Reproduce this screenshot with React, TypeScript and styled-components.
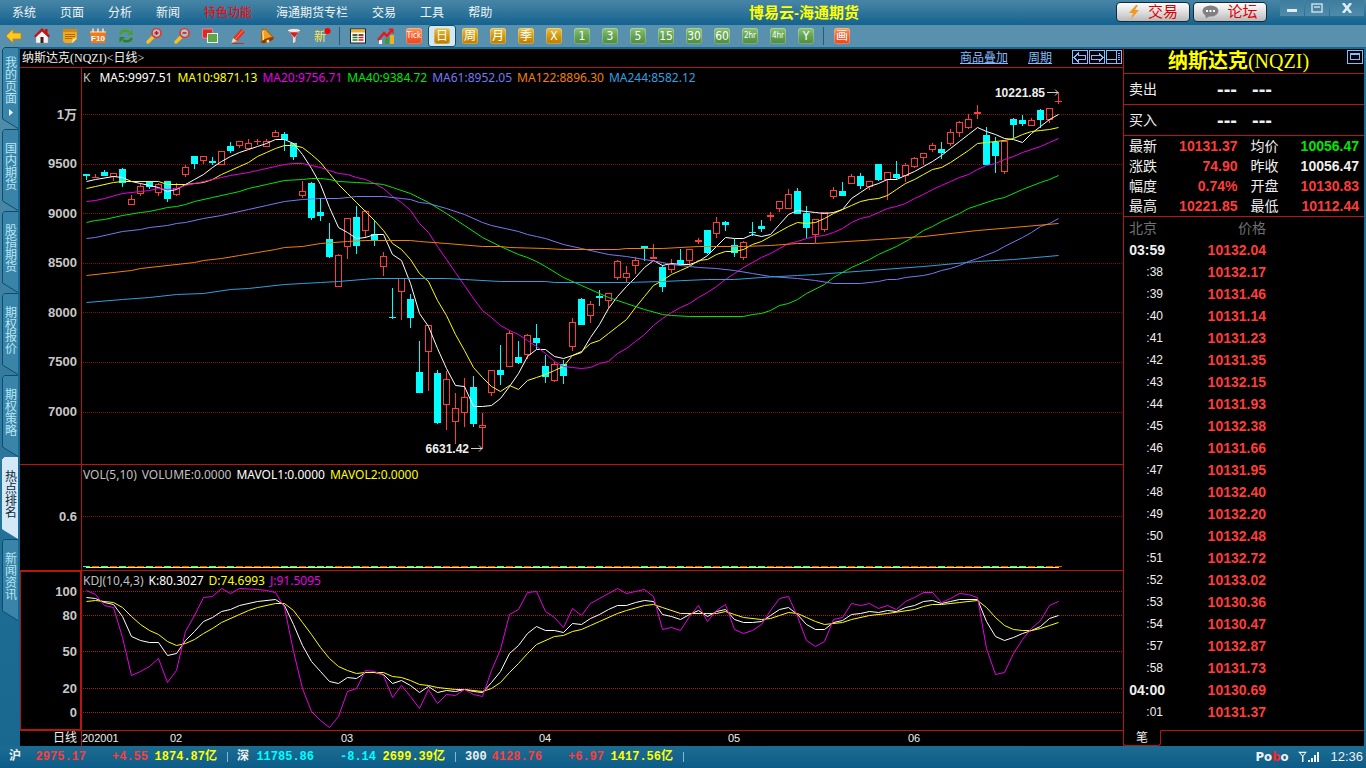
import React from "react";
import styled, { createGlobalStyle, css } from "styled-components";

/* ---------- theme values ---------- */

const RED = "#ff3c3c";
const CYAN = "#00ffff";
const YELLOW = "#ffff00";
const WHITE = "#f0f0f0";
const GREY = "#c0c0c0";
const MAGENTA = "#e800e8";
const GREEN = "#00e800";
const LINE = "#b8160c";
const SANS = '"Liberation Sans", "Noto Sans CJK SC", sans-serif';
const LABEL = '"DejaVu Sans Condensed", "DejaVu Sans", "Noto Sans CJK SC", sans-serif';
const LEGEND = '"Noto Sans", "Noto Sans CJK SC", sans-serif';
const SERIF = '"Liberation Serif", "Noto Sans CJK SC", serif';
const MONO = '"Liberation Mono", "Noto Sans CJK SC", monospace';

const GlobalStyle = createGlobalStyle`
  * { box-sizing: border-box; }
  body { margin: 0; background: #000; }
  button { margin: 0; padding: 0; border: 0; background: none; color: inherit; font: inherit; cursor: pointer; }
`;

/* ---------- chart data ---------- */

type Candle = [up: 0 | 1, top: number, bottom: number, high: number, low: number];

const CANDLES: Candle[] = [
  [0, 174, 176, 174, 180], [1, 177, 178, 174, 178], [0, 172, 176, 170, 176], [1, 173, 177, 173, 181],
  [0, 169, 183, 168, 187], [1, 199, 205, 195, 205], [1, 186, 194, 184, 196], [0, 182, 187, 182, 189],
  [1, 184, 193, 183, 196], [0, 181, 199, 181, 202], [1, 188, 195, 183, 196], [1, 167, 175, 165, 177],
  [0, 156, 164, 156, 169], [1, 156, 161, 156, 164], [0, 161, 163, 157, 165], [1, 151, 165, 151, 165],
  [0, 146, 151, 142, 153], [1, 141, 146, 141, 148], [1, 143, 149, 139, 149], [1, 141, 142, 139, 145],
  [1, 141, 147, 139, 147], [1, 132, 137, 130, 137], [0, 134, 140, 132, 151], [0, 143, 157, 143, 160],
  [1, 191, 196, 181, 198], [0, 183, 218, 182, 220], [0, 212, 216, 198, 221], [0, 239, 257, 223, 258],
  [1, 255, 287, 254, 287], [1, 218, 247, 218, 259], [0, 217, 246, 206, 254], [1, 211, 231, 210, 238],
  [0, 234, 240, 220, 246], [1, 256, 267, 252, 276], [0, 317, 318, 288, 319], [1, 278, 292, 278, 320],
  [0, 299, 318, 294, 328], [0, 372, 393, 341, 393], [1, 325, 352, 325, 391], [0, 373, 423, 370, 424],
  [1, 379, 405, 371, 430], [1, 408, 422, 393, 444], [1, 397, 413, 378, 427], [0, 387, 424, 376, 427],
  [1, 425, 428, 413, 449], [1, 370, 393, 370, 396], [0, 370, 375, 345, 385], [1, 333, 367, 331, 367],
  [0, 357, 363, 341, 364], [1, 335, 355, 334, 359], [0, 338, 343, 324, 349], [0, 366, 377, 355, 383],
  [1, 364, 381, 362, 382], [0, 364, 376, 360, 384], [1, 322, 347, 318, 351], [0, 299, 325, 298, 325],
  [1, 304, 316, 301, 323], [0, 296, 298, 290, 306], [1, 293, 301, 293, 308], [1, 261, 278, 260, 280],
  [1, 273, 278, 266, 282], [1, 260, 266, 257, 274], [0, 246, 248, 246, 261], [1, 257, 259, 244, 259],
  [0, 267, 287, 265, 292], [1, 264, 270, 259, 273], [0, 260, 264, 249, 264], [1, 249, 261, 249, 266],
  [1, 240, 242, 238, 244], [0, 230, 253, 230, 254], [1, 222, 234, 217, 238], [0, 222, 225, 221, 231],
  [0, 245, 253, 239, 257], [1, 242, 258, 241, 260], [0, 232, 233, 222, 236], [0, 226, 229, 220, 232],
  [1, 215, 217, 212, 221], [1, 201, 209, 201, 212], [1, 194, 209, 189, 209], [0, 191, 214, 188, 214],
  [0, 213, 228, 206, 238], [1, 219, 235, 219, 243], [1, 212, 230, 212, 232], [1, 190, 197, 187, 199],
  [0, 191, 196, 182, 196], [1, 176, 184, 174, 184], [0, 176, 186, 173, 189], [1, 181, 187, 181, 190],
  [0, 164, 180, 164, 181], [1, 172, 180, 172, 200], [0, 174, 178, 161, 180], [1, 165, 176, 163, 182],
  [1, 158, 167, 157, 168], [1, 153, 158, 153, 165], [1, 145, 150, 143, 152], [0, 149, 153, 142, 159],
  [1, 132, 144, 129, 146], [1, 122, 133, 121, 137], [1, 119, 128, 114, 129], [1, 112, 114, 105, 119],
  [0, 135, 165, 127, 165], [0, 142, 156, 137, 173], [1, 141, 172, 141, 174], [0, 119, 125, 118, 138],
  [0, 120, 124, 115, 126], [1, 120, 126, 118, 126], [0, 110, 120, 109, 128], [1, 108, 120, 108, 123],
  [1, 101, 102, 92, 104],
];

/* Each series is a list of "bar,level" knots. */
const MA5 =
  "0,181 1,179 3,176 4,177 5,181 6,183 8,187 9,191 10,189 11,184 12,179 13,174 14,167 15,161 16,156 17,152 18,149 19,146 20,143 21,139 22,139 23,143 24,154 25,168 26,184 27,207 28,227 29,232 30,238 31,237 32,234 33,234 34,254 35,260 36,283 37,313 38,326 39,348 40,368 41,385 42,386 43,406 44,406 45,405 46,398 47,386 48,373 49,356 50,349 51,349 52,356 53,358 54,355 55,352 56,337 57,324 58,308 59,296 60,286 61,277 62,267 63,260 64,265 65,263 66,264 67,264 68,261 69,255 70,246 71,237 72,238 73,238 74,234 75,236 76,234 77,224 78,214 79,210 80,211 81,212 82,213 83,212 84,209 85,198 86,192 87,186 88,183 89,179 90,179 91,175 92,171 93,166 94,161 95,155 96,148 97,141 98,134 99,127 100,131 101,134 102,138 103,139 104,142 105,133 106,126 107,119 108,114";
const MA10 =
  "0,188 1,186 3,182 4,181 8,181 9,184 11,184 13,182 14,179 15,174 16,170 17,166 18,162 19,156 20,152 21,148 22,145 23,145 24,147 25,154 26,162 27,173 28,184 29,193 30,202 31,211 32,220 33,230 34,243 35,249 36,259 37,273 38,281 39,300 40,315 41,334 42,350 43,367 44,377 45,386 46,391 47,385 48,389 49,380 50,377 51,374 52,370 53,366 54,355 55,351 56,343 57,340 58,333 59,326 60,319 61,307 62,296 63,285 64,280 65,274 66,270 67,266 68,260 69,259 70,254 71,251 72,251 73,249 74,244 75,241 76,236 77,231 78,226 79,222 80,223 81,222 82,218 83,213 84,209 85,205 86,201 87,199 88,198 89,195 90,189 91,183 92,179 93,174 94,169 95,167 96,162 97,156 98,150 99,143 100,142 102,140 103,138 104,134 105,131 106,130 107,129 108,127";
const MA20 =
  "0,201 1,200 2,198 4,193 6,191 7,190 8,188 9,189 10,188 11,185 12,183 13,181 14,179 15,177 16,175 18,172 19,170 21,166 22,164 23,163 24,163 25,165 26,167 27,170 28,173 29,174 30,177 31,179 32,183 33,188 34,196 35,202 36,210 37,223 38,232 39,246 40,259 41,272 42,285 43,298 44,310 45,317 46,325 47,330 48,334 49,340 50,346 51,353 52,361 53,366 54,367 55,368 56,367 57,363 58,361 59,353 60,348 61,341 62,334 63,325 64,318 65,312 66,307 67,303 68,297 69,292 70,286 71,279 72,273 73,267 74,262 75,257 76,253 77,248 78,243 79,241 80,238 81,236 82,235 83,232 84,228 85,222 86,218 87,216 88,212 89,208 90,206 91,203 92,198 93,194 94,189 95,185 96,181 97,177 98,174 99,169 100,165 101,163 102,159 103,156 104,152 105,149 106,146 107,142 108,138";
const MA40 =
  "0,222 1,220 2,219 4,215 6,212 7,211 8,209 9,207 10,206 11,204 12,201 14,197 16,193 17,191 18,188 20,184 22,180 24,179 25,178 26,178 27,179 28,181 30,182 32,183 33,184 34,187 36,193 38,202 40,213 42,225 44,237 46,246 48,254 49,257 50,261 51,266 53,277 55,285 58,297 60,303 62,309 64,314 65,315 67,316 73,316 74,314 75,313 76,310 77,305 78,303 79,299 80,293 82,284 83,277 85,267 87,259 88,254 90,246 92,236 93,230 94,226 95,221 97,213 98,208 99,205 101,199 102,197 104,189 106,182 107,179 108,175";
const MA61 =
  "0,238 1,237 4,231 6,229 7,227 9,225 10,223 11,222 13,218 15,215 18,209 20,205 22,201 24,199 26,198 28,198 30,196 33,196 35,198 36,199 37,202 38,203 40,208 42,214 44,222 45,225 48,231 49,234 50,236 51,238 53,244 55,248 58,254 60,256 62,259 64,262 65,264 68,267 70,268 72,270 74,273 76,276 79,278 81,280 83,283 86,283 88,281 89,279 90,279 91,277 93,275 94,273 95,270 96,268 97,265 98,261 99,258 101,251 102,246 104,237 105,232 106,226 107,223 108,218";
const MA122 =
  "0,275 5,270 6,268 12,262 13,260 15,258 17,255 19,252 21,249 22,247 24,246 26,243 29,241 31,240 36,240 37,241 40,243 44,246 46,246 47,247 51,248 53,249 59,249 60,248 64,248 68,246 73,246 76,245 79,243 81,243 88,239 93,236 99,230 103,227 108,223";
const MA244 =
  "0,302 4,299 7,297 10,294 13,293 16,289 18,288 22,284 24,283 26,282 28,281 32,278 40,278 42,279 46,281 51,281 52,282 60,282 64,281 69,279 72,279 75,277 79,275 81,274 84,272 87,270 93,266 99,261 103,259 108,255";
const KDJ_K =
  "0,597 1,598 2,602 3,604 4,616 5,636 6,640 7,642 8,642 9,655 10,653 11,640 12,631 13,621 14,617 15,611 16,609 17,605 19,601 21,599 22,605 23,624 24,645 25,661 26,671 27,681 28,683 29,677 30,678 31,672 32,672 33,674 34,683 35,680 36,685 37,692 38,686 39,692 40,690 41,691 42,689 43,691 44,692 45,682 46,671 47,653 48,645 49,633 50,626 51,630 52,630 53,632 54,623 55,624 56,618 57,614 58,609 59,605 60,605 61,602 62,600 63,601 64,614 65,616 66,619 67,614 68,610 69,616 70,611 71,609 72,619 73,622 74,622 75,621 76,615 77,609 78,607 79,614 80,624 81,629 82,629 83,622 84,620 85,614 86,613 87,611 88,612 89,610 90,611 91,607 92,605 93,601 94,600 95,603 96,601 97,599 99,599 100,621 101,636 102,640 103,637 104,633 105,630 106,626 107,618 108,615";
const KDJ_D =
  "0,601 1,600 3,602 4,607 5,616 6,624 7,630 8,634 9,641 10,645 11,643 12,639 13,633 14,628 15,622 17,614 18,610 19,607 21,603 22,603 23,610 24,622 25,634 26,647 27,658 28,666 29,670 30,673 31,672 33,672 34,676 35,677 36,680 37,684 38,685 39,687 41,689 42,689 44,691 45,688 46,682 47,672 48,663 49,653 50,644 52,636 53,635 54,631 55,629 56,625 57,621 59,613 60,610 62,605 63,604 64,607 66,613 70,613 71,611 72,614 73,617 75,619 76,618 77,615 78,612 79,613 80,617 81,621 82,624 84,622 85,619 87,615 89,613 92,609 93,606 94,604 95,604 97,602 99,600 100,607 101,617 102,625 103,629 104,630 105,630 106,628 107,625 108,622";
const KDJ_J =
  "0,590 1,594 2,605 3,607 4,637 5,675 6,671 7,666 8,658 9,682 10,670 11,631 12,615 13,597 14,596 15,588 16,593 17,588 19,589 20,590 21,592 22,607 23,651 24,688 25,711 26,720 27,727 28,716 29,691 30,688 31,670 32,671 33,675 34,697 35,685 36,696 37,708 38,689 39,703 40,694 41,695 42,689 43,694 44,696 45,670 46,649 47,614 48,609 49,592 50,591 51,611 52,617 53,627 54,608 55,615 56,603 57,598 58,593 59,588 60,593 61,591 62,589 63,596 64,629 65,627 66,630 67,616 68,605 69,621 70,610 71,604 72,629 73,633 74,630 75,624 76,610 77,598 78,596 79,616 80,640 81,646 82,641 83,619 84,617 85,603 86,605 87,603 88,608 89,605 90,609 91,601 92,597 93,592 94,592 95,602 96,598 97,593 98,594 99,597 100,648 101,674 102,672 103,653 104,639 105,628 106,620 107,605 108,601";

const PRICE_TOP = 68;
const KDJ_TOP = 571;
const STEP = 9;
const barX = (i: number) => 4 + i * STEP;

const toPoints = (knots: string, top: number) =>
  knots
    .split(" ")
    .map((k) => {
      const [i, y] = k.split(",").map(Number);
      return `${barX(i) + 0.5},${y - top + 0.5}`;
    })
    .join(" ");

/* ---------- frame ---------- */

const Page = styled.div`
  display: flex;
  flex-direction: column;
  min-height: 100vh;
  color: ${WHITE};
  font: 12px/16px ${SANS};
`;

const Header = styled.header`
  display: flex;
  height: 25px;
  padding-left: 12px;
  background: linear-gradient(#4785a6, #3a7c9f 30%, #136290);
`;

const Menu = styled.nav`
  display: flex;
  gap: 24px;
  align-items: center;
`;

const MenuItem = styled.button<{ $hot?: boolean }>`
  color: ${(p) => (p.$hot ? "#ff0000" : "#f0f4f6")};
  font-size: 12px;
  line-height: 24px;
  white-space: nowrap;
`;

const AppTitle = styled.h1`
  flex: 1;
  margin: 0;
  color: ${YELLOW};
  font-size: 15px;
  font-weight: 700;
  line-height: 25px;
  text-align: center;
  white-space: nowrap;
`;

const HeaderActions = styled.div`
  display: flex;
  gap: 3px;
  padding-top: 2px;
  margin-right: 13px;
`;

const ActionButton = styled.button`
  display: flex;
  align-items: center;
  justify-content: center;
  gap: 8px;
  width: 74px;
  height: 20px;
  border: 1px solid #102c3c;
  border-radius: 4px;
  background: linear-gradient(#fdfdfd, #d8d8d8 60%, #b8b8b8);
  color: #e00000;
  font-size: 15px;
  line-height: 18px;
`;

const WindowControls = styled.div`
  display: flex;
  gap: 1px;
  height: 16px;
  margin-right: 2px;
`;

const WindowButton = styled.button<{ $wide?: boolean }>`
  display: flex;
  align-items: center;
  justify-content: center;
  width: ${(p) => (p.$wide ? 34 : 24)}px;
  background: linear-gradient(#3d7c9e, #4f8cab);
`;

const Toolbar = styled.div`
  display: flex;
  align-items: center;
  height: 22px;
  background: #5990ad;
`;

const ToolButton = styled.button<{ $active?: boolean }>`
  display: flex;
  align-items: center;
  justify-content: center;
  width: 28px;
  height: 22px;
  ${(p) =>
    p.$active &&
    css`
      border: 1px solid #124c68;
      border-radius: 3px;
      background: #d2e8f5;
    `}
`;

const Divider = styled.span`
  width: 1px;
  height: 18px;
  margin: 0 4px 0 3px;
  background: #2c5a74;
`;

const badgeTones = {
  gold: "linear-gradient(#e8c050, #d09a10 50%, #b87c00)",
  green: "linear-gradient(#8cc474, #64a454 50%, #4c8c40)",
  orange: "linear-gradient(#ff9858, #f46434 50%, #e84820)",
};

const Badge = styled.span<{ $tone: keyof typeof badgeTones; $small?: boolean }>`
  width: 16px;
  height: 16px;
  border-radius: 3px;
  background: ${(p) => badgeTones[p.$tone]};
  box-shadow: inset 0 0 0 1px rgba(255, 255, 255, 0.25);
  color: #fff;
  font: ${(p) => (p.$small ? 8 : 12)}px/16px ${LABEL};
  text-align: center;
  white-space: nowrap;
`;

const Body = styled.main`
  display: flex;
  flex: 1;
  border-right: 2px solid #1c6e96;
`;

/* ---------- side tabs ---------- */

const SideBar = styled.nav`
  width: 20px;
  flex: none;
  padding-left: 2px;
  border-right: 2px solid #176890;
  background: linear-gradient(#5990ad, #1c6c94 80%, #18688f);
`;

const SideTab = styled.button<{ $active?: boolean; $arrow?: boolean }>`
  position: relative;
  display: flex;
  align-items: flex-start;
  width: 16px;
  height: 82px;
  padding: ${(p) => (p.$arrow ? 10 : 14)}px 1px 0 3px;
  color: ${(p) => (p.$active ? "#102838" : "#b8e8f4")};
  font-size: 12px;
  line-height: 12px;
  text-align: left;
  word-break: break-all;
`;

const TabShape = styled.svg`
  position: absolute;
  inset: 0;
`;

const TabText = styled.span`
  position: relative;
  width: 12px;
`;

/* ---------- chart ---------- */

const ChartArea = styled.section`
  display: flex;
  flex-direction: column;
  flex: 1;
  min-width: 0;
  border-top: 2px solid #176890;
  background: #000;
`;

const ChartHead = styled.div`
  display: flex;
  height: 19px;
  padding-left: 2px;
  border-bottom: 1px solid ${LINE};
  font: 12px/18px ${SERIF};
`;

const ChartName = styled.h2`
  flex: 1;
  margin: 0;
  font: inherit;
`;

const HeadLink = styled.a`
  margin-right: 20px;
  color: #80bcff;
  font: 12px/18px ${SANS};
  text-decoration: underline;
`;

const IconBox = styled.button`
  width: 16px;
  height: 16px;
  margin-right: 1px;
  line-height: 0;
`;

const Pane = styled.div<{ $height: number; $grow?: boolean }>`
  display: flex;
  flex: ${(p) => (p.$grow ? 1 : 0)} 0 ${(p) => p.$height}px;
  min-height: ${(p) => p.$height}px;
  border-bottom: 1px solid ${LINE};
`;

const Axis = styled.div<{ $top: number; $focus?: boolean }>`
  display: flex;
  flex: 0 0 62px;
  flex-direction: column;
  padding: ${(p) => p.$top}px 4px 0 0;
  border-right: 1px solid ${LINE};
  color: #c8c8c8;
  font-size: 13px;
  font-weight: 700;
  line-height: 16px;
  text-align: right;
  ${(p) => p.$focus && `box-shadow: inset 0 0 0 1px ${LINE};`}
`;

const AxisLabel = styled.span<{ $space: number }>`
  margin-top: ${(p) => p.$space}px;
`;

const Canvas = styled.div`
  display: grid;
  grid-template-rows: minmax(0, 1fr);
  flex: 1;
  min-width: 0;
  > * {
    grid-area: 1 / 1;
    min-width: 0;
  }
`;

const Plot = styled.svg`
  display: block;
  width: 100%;
  height: 100%;
  min-height: 0;
`;

const Legend = styled.div`
  display: flex;
  gap: 5px;
  height: 20px;
  padding-left: 1px;
  font: 12px/20px ${LEGEND};
  white-space: nowrap;
`;

const Ink = styled.span<{ $color: string; $gap?: number }>`
  color: ${(p) => p.$color};
  margin-right: ${(p) => p.$gap ?? 0}px;
`;

const DateRow = styled.div`
  display: flex;
  height: 15px;
  font: 11px/15px ${SANS};
`;

const PeriodCell = styled.div`
  flex: 0 0 62px;
  padding-right: 4px;
  border-right: 1px solid ${LINE};
  font-size: 12px;
  text-align: right;
`;

const DateCell = styled.span<{ $width: number }>`
  flex: 0 0 ${(p) => p.$width}px;
`;

/* ---------- quote panel ---------- */

const Quote = styled.aside`
  display: flex;
  flex: 0 0 241px;
  flex-direction: column;
  border-top: 2px solid #176890;
  border-left: 1px solid ${LINE};
  background: #000;
  font-size: 14px;
`;

const QuoteHead = styled.div`
  display: flex;
  height: 25px;
  padding-left: 6px;
  border-bottom: 1px solid ${LINE};
`;

const QuoteName = styled.h2`
  flex: 1;
  margin: 0;
  color: ${YELLOW};
  font: 700 20px/24px ${SERIF};
  text-align: center;
  white-space: nowrap;
`;

const QuoteCode = styled.span`
  font-weight: 400;
`;

const DepthRow = styled.div`
  display: flex;
  align-items: center;
  height: 31px;
  padding-left: 5px;
  border-bottom: 1px solid ${LINE};
`;

const DepthLabel = styled.span`
  width: 88px;
`;

const Dashes = styled.span`
  width: 35px;
  font-size: 20px;
  font-weight: 700;
  line-height: 20px;
`;

const Facts = styled.dl`
  display: grid;
  grid-template-columns: 1fr 1fr;
  column-gap: 13px;
  margin: 0;
  height: 81px;
  padding: 0 5px;
  border-bottom: 1px solid ${LINE};
`;

const Fact = styled.div`
  display: flex;
  justify-content: space-between;
  line-height: 20px;
`;

const FactValue = styled.dd<{ $color: string }>`
  margin: 0;
  color: ${(p) => p.$color};
  font-weight: 700;
`;

const Ticks = styled.table`
  border-collapse: collapse;
  table-layout: fixed;
  width: 142px;
  margin-bottom: auto;
`;

const HeadCell = styled.th<{ $width: number; $right?: boolean }>`
  width: ${(p) => p.$width}px;
  height: 22px;
  padding: 0 0 0 ${(p) => (p.$right ? 0 : 5)}px;
  color: #707070;
  font-weight: 400;
  line-height: 22px;
  text-align: ${(p) => (p.$right ? "right" : "left")};
`;

const TimeCell = styled.td<{ $minute?: boolean }>`
  height: 22px;
  padding: 0 ${(p) => (p.$minute ? 0 : 2)}px 0 0;
  font-size: ${(p) => (p.$minute ? 14 : 12)}px;
  font-weight: ${(p) => (p.$minute ? 700 : 400)};
  text-align: right;
`;

const PriceCell = styled.td`
  padding: 0;
  color: ${RED};
  font-weight: 700;
  text-align: right;
`;

const QuoteTabs = styled.div`
  display: flex;
  height: 16px;
`;

const QuoteTab = styled.button`
  width: 38px;
  height: 16px;
  margin-left: -1px;
  border: 1px solid ${LINE};
  border-top-color: transparent;
  border-radius: 0 0 3px 3px;
  font-size: 12px;
  line-height: 14px;
`;

const TabFill = styled.span`
  flex: 1;
  border-top: 1px solid ${LINE};
`;

/* ---------- status bar ---------- */

const StatusBar = styled.footer`
  display: flex;
  align-items: center;
  height: 22px;
  padding-left: 9px;
  background: linear-gradient(#1c6c92, #0c5c88);
`;

const IndexGroup = styled.div`
  display: grid;
  grid-template-columns: 77px 62px 69px 20px;
  color: ${YELLOW};
  font: 700 12px/22px ${MONO};
  text-align: right;
  white-space: nowrap;
`;

const IndexHead = styled.span`
  display: flex;
  justify-content: space-between;
`;

const Bar = styled.span`
  justify-self: center;
  align-self: center;
  width: 1px;
  height: 10px;
  background: #80b8d8;
`;

const StatusRight = styled.div`
  display: flex;
  gap: 10px;
  align-items: center;
  margin-left: auto;
  padding-right: 3px;
  font-size: 13px;
  line-height: 22px;
`;

const Brand = styled.strong`
  font: 700 13px/22px ${LABEL};
`;

/* ---------- icons ---------- */

const toolIcons: [string, React.ReactNode][] = [
  ["后退", <path d="M1 9 L8 2 V6 H16 V12 H8 V16 Z" fill="#ffc820" stroke="#c88400" strokeWidth=".8" />],
  [
    "首页",
    <>
      <path d="M3 9 L9 3 L15 9 V16 H3 Z" fill="#f4f4f4" stroke="#a0a0a0" strokeWidth=".5" />
      <path d="M1 9 L9 1 L12 4 V2 H14.5 V6 L17 9 L15.500 10.500 L9 4.500 L2.500 10.500 Z" fill="#c81010" />
      <path d="M7.500 10 H10.500 V16 H7.500 Z" fill="#402018" />
    </>,
  ],
  [
    "便笺",
    <>
      <path d="M2 2 H16 V12 L12 16 H4 L2 14 Z" fill="#f0a820" />
      <path d="M2 2 H16 V5 H2 Z" fill="#d08810" />
      <path d="M4 7.500 H14 M4 9.500 H14 M4 11.500 H11" stroke="#b06c00" />
      <path d="M11 16 L12 12 L16 11 Z" fill="#fff0c0" />
    </>,
  ],
  [
    "资料",
    <>
      <path d="M1 4 H17 L16 16 H2 Z" fill="#f47820" />
      <path d="M1 4 H17 V6 H1 Z" fill="#f8b060" />
      <path d="M4 1.500 V5 M9 1.500 V5 M14 1.500 V5" stroke="#e8e8e8" strokeWidth="1.500" />
      <text x="9" y="14" fill="#fff" fontFamily="Liberation Sans" fontSize="8" fontWeight="700" textAnchor="middle">F10</text>
    </>,
  ],
  [
    "刷新",
    <>
      <path d="M3 7 C5 3 10 3 12 5" fill="none" stroke="#48a020" strokeWidth="2.500" />
      <path d="M15.500 2.500 V8 H10 Z" fill="#48a020" />
      <path d="M15 11 C13 15 8 15 6 13" fill="none" stroke="#2c8418" strokeWidth="2.500" />
      <path d="M2.500 15.500 V10 H8 Z" fill="#2c8418" />
    </>,
  ],
  [
    "放大",
    <>
      <path d="M3 15 L8 10" stroke="#f8c020" strokeWidth="3.500" strokeLinecap="round" />
      <circle cx="11.500" cy="6" r="4.500" fill="#a8c4d0" stroke="#e83828" strokeWidth="1.700" />
      <path d="M9.500 6 H13.500 M11.500 4 V8" stroke="#d01010" strokeWidth="1.500" />
    </>,
  ],
  [
    "缩小",
    <>
      <path d="M3 15 L8 10" stroke="#f8c020" strokeWidth="3.500" strokeLinecap="round" />
      <circle cx="11.500" cy="6" r="4.500" fill="#a8c4d0" stroke="#e83828" strokeWidth="1.700" />
      <path d="M9.500 6 H13.500" stroke="#d01010" strokeWidth="1.500" />
    </>,
  ],
  [
    "叠加",
    <>
      <rect x="1.500" y="2" width="10" height="9" fill="#e02828" stroke="#f08080" />
      <rect x="6.500" y="6.500" width="10" height="9" fill="#5ca848" stroke="#e8f4e8" />
    </>,
  ],
  [
    "画线",
    <>
      <path d="M3 16.500 H15" stroke="#c03020" />
      <path d="M4 11 L12 2 L16 5 L8 14 Z" fill="#e83020" />
      <path d="M6 12.500 L14 3.500" stroke="#ff8868" />
      <path d="M4 11 L8 14 L2.500 16 Z" fill="#f4d8a0" />
    </>,
  ],
  [
    "预警",
    <g transform="rotate(-20 9 9)">
      <path d="M9 1.500 C5 2 6 8 2.500 13 H15.500 C12 8 13 2 9 1.500 Z" fill="#f0a020" stroke="#a85800" />
      <path d="M8 3 C6.500 5 7 9 5 12" stroke="#fff0a0" fill="none" />
      <ellipse cx="9" cy="13.500" rx="6.500" ry="2" fill="#903808" />
      <circle cx="9" cy="14.500" r="1.500" fill="#ffd880" />
    </g>,
  ],
  [
    "筛选",
    <>
      <path d="M2 3 H16 L11 10 V15 L7.500 17 V10 Z" fill="#d8e0e4" stroke="#687880" strokeWidth=".8" />
      <ellipse cx="9" cy="3.500" rx="6.500" ry="2" fill="#e8ecf0" stroke="#687880" strokeWidth=".7" />
      <path d="M4.500 5.500 H13.500 L9.500 10.500 Z" fill="#e01818" />
    </>,
  ],
  [
    "新功能",
    <>
      <text x="7" y="14" fill="#ffe850" fontFamily="Noto Sans CJK SC" fontSize="12" textAnchor="middle">新</text>
      <circle cx="14.500" cy="4" r="3" fill="#ff0000" />
    </>,
  ],
];

const chartIcons: [string, React.ReactNode][] = [
  [
    "报价表",
    <>
      <rect x="1.500" y="2" width="15" height="14" fill="#fff" stroke="#182028" />
      <path d="M2 4 H16" stroke="#f0b020" strokeWidth="3" />
      <path d="M3.500 8 H8.500 M9.500 8 H14.500" stroke="#202020" strokeWidth="1.300" />
      <path d="M3.500 10.500 H8.500 M3.500 13 H8.500" stroke="#208020" strokeWidth="1.300" />
      <path d="M9.500 10.500 H14.500 M9.500 13 H14.500" stroke="#d02020" strokeWidth="1.300" />
    </>,
  ],
  [
    "走势图",
    <>
      <rect x="2" y="13" width="3" height="4" fill="#f4f4f4" />
      <rect x="8" y="11" width="4" height="6" fill="#409838" />
      <rect x="13" y="8" width="4" height="9" fill="#f0b020" />
      <path d="M1 13 L7 6 L10 9 L15 3" fill="none" stroke="#e81818" strokeWidth="2.500" />
      <path d="M11 1.500 H16.500 V7 Z" fill="#e81818" />
    </>,
  ],
];

const periods: [string, keyof typeof badgeTones, boolean?][] = [
  ["Tick", "orange", true], ["日", "gold"], ["周", "gold"], ["月", "gold"], ["季", "gold"], ["X", "gold"],
  ["1", "green"], ["3", "green"], ["5", "green"], ["15", "green"], ["30", "green"], ["60", "green"],
  ["2hr", "green", true], ["4hr", "green", true], ["Y", "green"],
];

const Icon = ({ children }: { children: React.ReactNode }) => (
  <svg width="18" height="18" viewBox="0 0 18 18" aria-hidden="true">
    {children}
  </svg>
);

const Framed = ({ d }: { d: string }) => (
  <svg width="16" height="16" viewBox="0 0 16 16" aria-hidden="true" fill="none" stroke="#80bcff" shapeRendering="crispEdges">
    <rect x=".5" y="1.500" width="15" height="13" />
    <path d={d} />
  </svg>
);

/* ---------- plots ---------- */

const GridLines = ({ ys, color }: { ys: number[]; color: string }) => (
  <g stroke={color} strokeDasharray="1 1" shapeRendering="crispEdges">
    {ys.map((y) => (
      <line key={y} x1="1" x2="100%" y1={y + 0.5} y2={y + 0.5} />
    ))}
  </g>
);

const Series = ({ knots, top, color }: { knots: string; top: number; color: string }) => (
  <polyline points={toPoints(knots, top)} fill="none" stroke={color} />
);

const Arrow = ({ x, y }: { x: number; y: number }) => (
  <path d={`M${x} ${y} h11 m-3 -3 l3 3 l-3 3`} fill="none" stroke="#d0d0d0" />
);

const CandleShape = ({ candle, index }: { candle: Candle; index: number }) => {
  const [up, t, b, h, l] = candle;
  const x = barX(index);
  const hollow = up === 1 && b - t > 2;
  const y = t - PRICE_TOP;
  const height = b - t;
  return (
    <g fill={up ? RED : CYAN}>
      {h < t && <rect x={x} y={h - PRICE_TOP} width="1" height={t - h} />}
      {l > b && <rect x={x} y={b - PRICE_TOP} width="1" height={l - b} />}
      {hollow ? (
        <rect x={x - 2.5} y={y + 0.5} width="6" height={height - 1} fill="none" stroke={RED} />
      ) : (
        <rect x={x - 3} y={y} width="7" height={height} />
      )}
    </g>
  );
};

/* ---------- content ---------- */

const menu = ["系统", "页面", "分析", "新闻", "特色功能", "海通期货专栏", "交易", "工具", "帮助"];
const sideTabs = ["我的页面", "国内期货", "股指期货", "期权报价", "期权策略", "热点排名", "新闻资讯"];

const facts: [string, string, string][] = [
  ["最新", "10131.37", RED], ["均价", "10056.47", GREEN],
  ["涨跌", "74.90", RED], ["昨收", "10056.47", WHITE],
  ["幅度", "0.74%", RED], ["开盘", "10130.83", RED],
  ["最高", "10221.85", RED], ["最低", "10112.44", RED],
];

const ticks: [string, string][] = [
  ["03:59", "10132.04"], [":38", "10132.17"], [":39", "10131.46"], [":40", "10131.14"], [":41", "10131.23"],
  [":42", "10131.35"], [":43", "10132.15"], [":44", "10131.93"], [":45", "10132.38"], [":46", "10131.66"],
  [":47", "10131.95"], [":48", "10132.40"], [":49", "10132.20"], [":50", "10132.48"], [":51", "10132.72"],
  [":52", "10133.02"], [":53", "10130.36"], [":54", "10130.47"], [":57", "10132.87"], [":58", "10131.73"],
  ["04:00", "10130.69"], [":01", "10131.37"],
];

const averages: [string, string, string][] = [
  ["MA5:9997.51", "#ffffff", MA5],
  ["MA10:9871.13", YELLOW, MA10],
  ["MA20:9756.71", MAGENTA, MA20],
  ["MA40:9384.72", GREEN, MA40],
  ["MA61:8952.05", "#7878f4", MA61],
  ["MA122:8896.30", "#f48000", MA122],
  ["MA244:8582.12", "#30a0e0", MA244],
];

const indices: [string, string, string, string, string][] = [
  ["沪", "2975.17", "+4.55", "1874.87亿", RED],
  ["深", "11785.86", "-8.14", "2699.39亿", CYAN],
  ["300", "4128.76", "+6.97", "1417.56亿", RED],
];

const dates: [string, number][] = [["202001", 88], ["02", 171], ["03", 198], ["04", 189], ["05", 180], ["06", 40]];

const kdjLevels: [string, number][] = [["100", 0], ["80", 8], ["50", 20], ["20", 21], ["0", 8]];

export default function App() {
  return (
    <Page>
      <GlobalStyle />
      <Header>
        <Menu>
          {menu.map((m) => (
            <MenuItem key={m} $hot={m === "特色功能"}>{m}</MenuItem>
          ))}
        </Menu>
        <AppTitle>博易云-海通期货</AppTitle>
        <HeaderActions>
          <ActionButton>
            <svg width="12" height="14" viewBox="0 0 12 14" aria-hidden="true">
              <path d="M8 0 L1 8 H5 L3 14 L11 5 H7 L10 0 Z" fill="#f09820" />
            </svg>
            交易
          </ActionButton>
          <ActionButton>
            <svg width="17" height="14" viewBox="0 0 17 14" aria-hidden="true">
              <ellipse cx="8.500" cy="6" rx="8" ry="5.500" fill="#808080" />
              <path d="M3 9 L4 13.500 L9 10 Z" fill="#808080" />
              <path d="M4 6 H6 M7.500 6 H9.500 M11 6 H13" stroke="#fff" strokeWidth="2" />
            </svg>
            论坛
          </ActionButton>
        </HeaderActions>
        <WindowControls>
          <WindowButton aria-label="最小化">
            <svg width="12" height="10" viewBox="0 0 12 10"><path d="M1 7.500 H11" stroke="#e0eef4" strokeWidth="3" /></svg>
          </WindowButton>
          <WindowButton aria-label="最大化">
            <svg width="12" height="10" viewBox="0 0 12 10"><path d="M1 1 H11 V9 H1 Z M3 4 H9" fill="none" stroke="#c8dce6" strokeWidth="1.500" /></svg>
          </WindowButton>
          <WindowButton $wide aria-label="关闭">
            <svg width="12" height="10" viewBox="0 0 12 10"><path d="M2 0 L10 10 M10 0 L2 10" stroke="#e0eef4" strokeWidth="2.500" /></svg>
          </WindowButton>
        </WindowControls>
      </Header>

      <Toolbar>
        {toolIcons.map(([name, art]) => (
          <ToolButton key={name} aria-label={name}><Icon>{art}</Icon></ToolButton>
        ))}
        <Divider />
        {chartIcons.map(([name, art]) => (
          <ToolButton key={name} aria-label={name}><Icon>{art}</Icon></ToolButton>
        ))}
        {periods.map(([name, tone, small]) => (
          <ToolButton key={name} $active={name === "日"}>
            <Badge $tone={tone} $small={small}>{name}</Badge>
          </ToolButton>
        ))}
        <Divider />
        <ToolButton><Badge $tone="orange">画</Badge></ToolButton>
      </Toolbar>

      <Body>
        <SideBar>
          {sideTabs.map((t, i) => (
            <SideTab key={t} $active={t === "热点排名"} $arrow={i === 0}>
              <TabShape width="16" height="82" viewBox="0 0 16 82" aria-hidden="true">
                <path
                  d="M16 .5 H2.500 L.5 2.500 V72 L16 81.500"
                  fill={t === "热点排名" ? "#d4e9f7" : "#3a84a9"}
                  stroke={t === "热点排名" ? "#d4e9f7" : "#0e4c6c"}
                />
                {i === 0 && <path d="M7 62 L11 65.500 L7 69 Z" fill="#e8f8ff" />}
              </TabShape>
              <TabText>{t}</TabText>
            </SideTab>
          ))}
        </SideBar>

        <ChartArea>
          <ChartHead>
            <ChartName>纳斯达克(NQZI)&lt;日线&gt;</ChartName>
            <HeadLink href="#overlay">商品叠加</HeadLink>
            <HeadLink href="#period">周期</HeadLink>
            <IconBox aria-label="向左"><Framed d="M2 8.500 L6 4.500 V6.500 H13.500 V10.500 H6 V12.500 Z" /></IconBox>
            <IconBox aria-label="向右"><Framed d="M14 8.500 L10 4.500 V6.500 H2.500 V10.500 H10 V12.500 Z" /></IconBox>
            <IconBox aria-label="布局"><Framed d="M10.500 2 V14 M1 10.500 H10 M12 4.500 H14 M12 6.500 H14 M12 8.500 H14 M12 10.500 H14" /></IconBox>
          </ChartHead>

          <Pane $height={397} $grow>
            <Axis $top={39}>
              {["1万", "9500", "9000", "8500", "8000", "7500", "7000"].map((v, i) => (
                <AxisLabel key={v} $space={i === 0 ? 0 : i % 2 ? 33 : 34}>{v}</AxisLabel>
              ))}
            </Axis>
            <Canvas>
              <Plot role="img" aria-label="日线K线图">
                <GridLines ys={[46, 96, 145, 195, 244, 294, 344]} color="#900808" />
                <g shapeRendering="crispEdges">
                  {CANDLES.map((c, i) => (
                    <CandleShape key={i} candle={c} index={i} />
                  ))}
                </g>
                {averages.map(([name, color, knots]) => (
                  <Series key={name} knots={knots} top={PRICE_TOP} color={color} />
                ))}
                <g fill="#f0f0f0" fontFamily="Liberation Sans" fontSize="12" fontWeight="700" textAnchor="end">
                  <text x="963" y="29">10221.85</text>
                  <text x="387" y="385">6631.42</text>
                </g>
                <Arrow x={965} y={24.5} />
                <Arrow x={389} y={380.5} />
              </Plot>
              <Legend>
                <Ink $color={GREY} $gap={4}>K</Ink>
                {averages.map(([name, color]) => (
                  <Ink key={name} $color={color}>{name}</Ink>
                ))}
              </Legend>
            </Canvas>
          </Pane>

          <Pane $height={106}>
            <Axis $top={44}>0.6</Axis>
            <Canvas>
              <Plot role="img" aria-label="成交量">
                <GridLines ys={[51]} color="#900808" />
                <g shapeRendering="crispEdges">
                  {CANDLES.map(([up], i) => (
                    <rect key={i} x={barX(i) - 3} y="101" width="7" height="1" fill={up ? RED : CYAN} />
                  ))}
                  <rect x="4" y="102" width={108 * STEP + 1} height="1" fill={YELLOW} />
                </g>
              </Plot>
              <Legend>
                <Ink $color={GREY}>VOL(5,10)</Ink>
                <Ink $color={GREY}>VOLUME:0.0000</Ink>
                <Ink $color="#ffffff">MAVOL1:0.0000</Ink>
                <Ink $color={YELLOW}>MAVOL2:0.0000</Ink>
              </Legend>
            </Canvas>
          </Pane>

          <Pane $height={160}>
            <Axis $top={13} $focus>
              {kdjLevels.map(([v, space]) => (
                <AxisLabel key={v} $space={space}>{v}</AxisLabel>
              ))}
            </Axis>
            <Canvas>
              <Plot role="img" aria-label="KDJ指标">
                <GridLines ys={[20, 44, 80, 117, 141]} color="#b81810" />
                <Series knots={KDJ_K} top={KDJ_TOP} color="#ffffff" />
                <Series knots={KDJ_D} top={KDJ_TOP} color={YELLOW} />
                <Series knots={KDJ_J} top={KDJ_TOP} color={MAGENTA} />
              </Plot>
              <Legend>
                <Ink $color={GREY}>KDJ(10,4,3)</Ink>
                <Ink $color="#ffffff">K:80.3027</Ink>
                <Ink $color={YELLOW}>D:74.6993</Ink>
                <Ink $color={MAGENTA}>J:91.5095</Ink>
              </Legend>
            </Canvas>
          </Pane>

          <DateRow>
            <PeriodCell>日线</PeriodCell>
            {dates.map(([d, w]) => (
              <DateCell key={d} $width={w}>{d}</DateCell>
            ))}
          </DateRow>
        </ChartArea>

        <Quote>
          <QuoteHead>
            <QuoteName>纳斯达克<QuoteCode>(NQZI)</QuoteCode></QuoteName>
            <IconBox aria-label="还原"><Framed d="M3 4.500 H12.500 V10.500 H3.500 V4 M3 5.500 H12" /></IconBox>
          </QuoteHead>
          {["卖出", "买入"].map((side) => (
            <DepthRow key={side}>
              <DepthLabel>{side}</DepthLabel>
              <Dashes>---</Dashes>
              <Dashes>---</Dashes>
            </DepthRow>
          ))}
          <Facts>
            {facts.map(([label, value, color]) => (
              <Fact key={label}>
                <dt>{label}</dt>
                <FactValue $color={color}>{value}</FactValue>
              </Fact>
            ))}
          </Facts>
          <Ticks>
            <thead>
              <tr>
                <HeadCell $width={41}>北京</HeadCell>
                <HeadCell $width={101} $right>价格</HeadCell>
              </tr>
            </thead>
            <tbody>
              {ticks.map(([time, price]) => (
                <tr key={time}>
                  <TimeCell $minute={time.length > 3}>{time}</TimeCell>
                  <PriceCell>{price}</PriceCell>
                </tr>
              ))}
            </tbody>
          </Ticks>
          <QuoteTabs>
            <QuoteTab>笔</QuoteTab>
            <TabFill />
          </QuoteTabs>
        </Quote>
      </Body>

      <StatusBar>
        {indices.map(([name, price, change, amount, color]) => (
          <IndexGroup key={name}>
            <IndexHead>
              <Ink $color={WHITE}>{name}</Ink>
              <Ink $color={color}>{price}</Ink>
            </IndexHead>
            <Ink $color={color}>{change}</Ink>
            <span>{amount}</span>
            <Bar />
          </IndexGroup>
        ))}
        <StatusRight>
          <Brand>Po<Ink $color="#ff2020">b</Ink>o</Brand>
          <svg width="22" height="12" viewBox="0 0 22 12" aria-label="信号" fill="#f0f4f6">
            <path d="M0 .8 H9 L5.500 5 V11 H4 V5 Z M2.500 2 L4.750 4.500 L7 2 Z" fillRule="evenodd" />
            <path d="M10 9 H12 V11 H10 Z M13 7 H15 V11 H13 Z M16 4 H18 V11 H16 Z M19 1 H21 V11 H19 Z" />
          </svg>
          <span>12:36</span>
        </StatusRight>
      </StatusBar>
    </Page>
  );
}
